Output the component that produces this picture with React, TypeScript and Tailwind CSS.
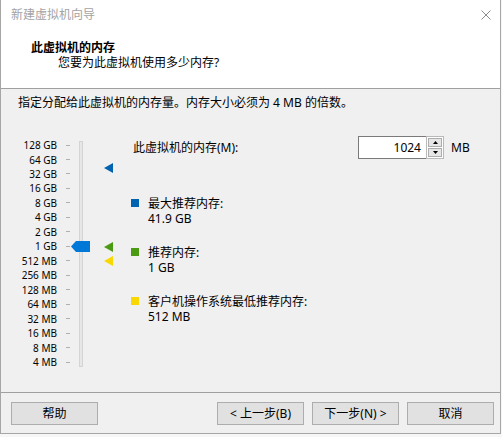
import React from "react";

const labels = [
  "128 GB", "64 GB", "32 GB", "16 GB", "8 GB", "4 GB", "2 GB", "1 GB",
  "512 MB", "256 MB", "128 MB", "64 MB", "32 MB", "16 MB", "8 MB", "4 MB",
];

function Marker({ color, top }: { color: string; top: number }) {
  return (
    <svg
      className="absolute left-[103px]"
      style={{ top }}
      width="9"
      height="10"
      viewBox="0 0 9 10"
    >
      <polygon points="0,5 9,0 9,10" fill={color} />
    </svg>
  );
}

function Legend({ color, title, value }: { color: string; title: string; value: string }) {
  return (
    <div className="flex">
      <div className={`w-[8px] h-[8px] mt-[3px] ${color}`} />
      <div className="ml-[9px] flex flex-col">
        <div className="h-[15px] leading-[15px]">{title}</div>
        <div className="h-[15px] leading-[15px]">{value}</div>
      </div>
    </div>
  );
}

function Btn({ children }: { children: React.ReactNode }) {
  return (
    <div className="w-[87px] h-[23px] bg-[#e1e1e1] border border-[#adadad] flex items-center justify-center leading-[15px]">
      {children}
    </div>
  );
}

export default function App() {
  return (
    <div className="w-[502px] h-[437px] bg-[#f7f7f7] overflow-hidden font-['Noto_Sans','Noto_Sans_CJK_SC',sans-serif] text-[12px] text-black">
      <div className="w-[501px] h-[434px] border-x border-b border-[#a6a6a6] bg-[#f0f0f0] flex flex-col">
        {/* title bar */}
        <div className="h-[30px] shrink-0 bg-white flex items-center justify-between pl-[10px] pr-[9px] text-[#a3a3a3]">
          <span className="leading-[16px]">新建虚拟机向导</span>
          <svg width="10" height="10" viewBox="0 0 10 10">
            <path d="M0.5 0.5 L9.5 9.5 M9.5 0.5 L0.5 9.5" stroke="#8c8c8c" strokeWidth="1" />
          </svg>
        </div>

        {/* header */}
        <div className="h-[59px] shrink-0 bg-white border-b border-[#a0a0a0] flex flex-col pl-[30px] pt-[9.5px]">
          <div className="font-bold leading-[15px]">此虚拟机的内存</div>
          <div className="pl-[27px] leading-[15px]">您要为此虚拟机使用多少内存?</div>
        </div>

        {/* content */}
        <div className="flex-1 flex flex-col">
          <div className="pl-[17px] pt-[6px] leading-[16px]">
            指定分配给此虚拟机的内存量。内存大小必须为 4 MB 的倍数。
          </div>

          <div className="flex mt-[25px]">
            {/* slider */}
            <div className="relative w-[130px] h-[232px] mt-[1.8px] flex">
              <div className="w-[56px] flex flex-col text-[10px] text-right">
                {labels.map((l) => (
                  <div key={l} className="h-[14.47px] flex items-center justify-end leading-[12px]">
                    {l}
                  </div>
                ))}
              </div>
              <div className="ml-[9px] w-[4px] flex flex-col">
                {labels.map((l) => (
                  <div key={l} className="h-[14.47px] flex items-center">
                    <div className="w-[4px] h-[1px] bg-[#b0b0b0]" />
                  </div>
                ))}
              </div>
              {/* track */}
              <div className="absolute left-[78px] top-[3.2px] w-[4px] h-[226px] bg-[#e7e7e7] border border-[#d4d4d4]" />
              {/* thumb */}
              <svg className="absolute left-[70px] top-[103.2px]" width="19" height="11" viewBox="0 0 19 11">
                <polygon points="0,5.5 5,0 19,0 19,11 5,11" fill="#0078d7" />
              </svg>
              <Marker color="#0063b1" top={25.2} />
              <Marker color="#4a9a14" top={104.2} />
              <Marker color="#f8d800" top={118.2} />
            </div>

            {/* right panel */}
            <div className="flex flex-col">
              <div className="flex items-center h-[23px]">
                <div className="w-[227px] pl-[2px] leading-[15px]">此虚拟机的内存(M):</div>
                <div className="w-[69px] h-[23px] bg-white border border-[#7a7a7a] flex items-center justify-end pr-[5px] leading-[15px]">
                  1024
                </div>
                <div className="ml-[-1px] w-[18px] h-[23px] bg-white border border-[#b9b9b9] flex flex-col p-[1px] gap-[1px]">
                  <div className="flex-1 bg-[#e6e6e6] border border-[#adadad] flex items-center justify-center">
                    <svg width="5" height="3" viewBox="0 0 5 3"><polygon points="2.5,0 5,3 0,3" fill="#000" /></svg>
                  </div>
                  <div className="flex-1 bg-[#e6e6e6] border border-[#adadad] flex items-center justify-center">
                    <svg width="5" height="3" viewBox="0 0 5 3"><polygon points="0,0 5,0 2.5,3" fill="#000" /></svg>
                  </div>
                </div>
                <div className="ml-[7px] leading-[15px]">MB</div>
              </div>

              <div className="mt-[36.5px] flex flex-col gap-[19px]">
                <Legend color="bg-[#0063b1]" title="最大推荐内存:" value="41.9 GB" />
                <Legend color="bg-[#4a9a14]" title="推荐内存:" value="1 GB" />
                <Legend color="bg-[#f8d800]" title="客户机操作系统最低推荐内存:" value="512 MB" />
              </div>
            </div>
          </div>
        </div>

        {/* footer */}
        <div className="h-[41px] shrink-0 border-t border-[#a0a0a0] flex pt-[9px] pl-[10px] pr-[6px]">
          <Btn>帮助</Btn>
          <div className="flex-1" />
          <div className="flex gap-[8px]">
            <Btn>&lt; 上一步(B)</Btn>
            <Btn>下一步(N) &gt;</Btn>
            <Btn>取消</Btn>
          </div>
        </div>
      </div>
    </div>
  );
}
